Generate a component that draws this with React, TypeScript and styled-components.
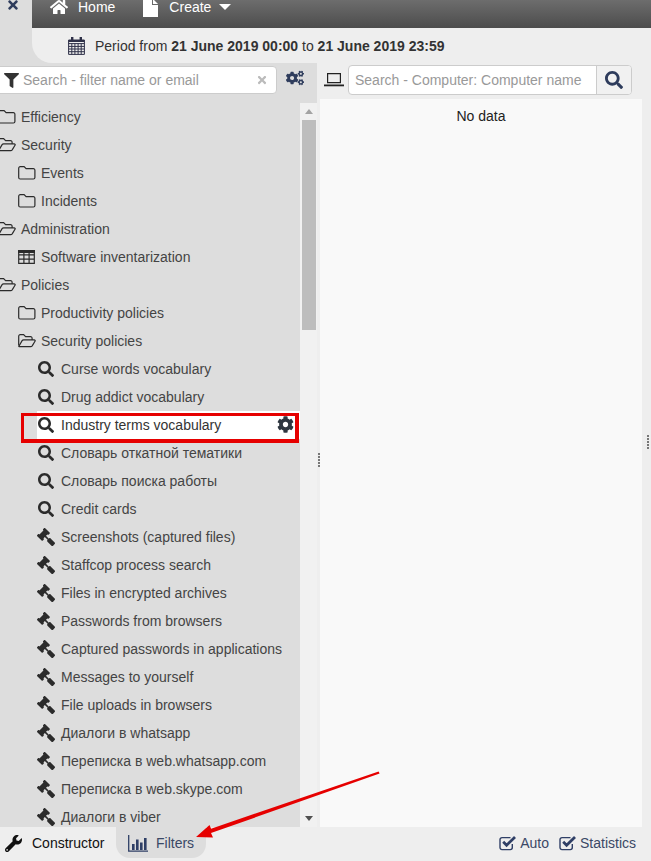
import React from "react";
import styled, { createGlobalStyle } from "styled-components";
import { FaCog, FaCogs, FaFilter, FaGavel, FaHome, FaSearch, FaTimes, FaWrench } from "react-icons/fa";

const GlobalStyle = createGlobalStyle`
  html, body {
    margin: 0;
    padding: 0;
    background: #eee;
  }
  body {
    font-family: "Liberation Sans", Arial, sans-serif;
    font-size: 14px;
    overflow: hidden;
  }
`;

type TreeItem = { label: string; icon: string; level: number; selected?: boolean };

const items: TreeItem[] = [
  { label: "Efficiency", icon: "folder", level: 0 },
  { label: "Security", icon: "open", level: 0 },
  { label: "Events", icon: "folder", level: 1 },
  { label: "Incidents", icon: "folder", level: 1 },
  { label: "Administration", icon: "open", level: 0 },
  { label: "Software inventarization", icon: "table", level: 1 },
  { label: "Policies", icon: "open", level: 0 },
  { label: "Productivity policies", icon: "folder", level: 1 },
  { label: "Security policies", icon: "open", level: 1 },
  { label: "Curse words vocabulary", icon: "search", level: 2 },
  { label: "Drug addict vocabulary", icon: "search", level: 2 },
  { label: "Industry terms vocabulary", icon: "search", level: 2, selected: true },
  { label: "Словарь откатной тематики", icon: "search", level: 2 },
  { label: "Словарь поиска работы", icon: "search", level: 2 },
  { label: "Credit cards", icon: "search", level: 2 },
  { label: "Screenshots (captured files)", icon: "gavel", level: 2 },
  { label: "Staffcop process search", icon: "gavel", level: 2 },
  { label: "Files in encrypted archives", icon: "gavel", level: 2 },
  { label: "Passwords from browsers", icon: "gavel", level: 2 },
  { label: "Captured passwords in applications", icon: "gavel", level: 2 },
  { label: "Messages to yourself", icon: "gavel", level: 2 },
  { label: "File uploads in browsers", icon: "gavel", level: 2 },
  { label: "Диалоги в whatsapp", icon: "gavel", level: 2 },
  { label: "Переписка в web.whatsapp.com", icon: "gavel", level: 2 },
  { label: "Переписка в web.skype.com", icon: "gavel", level: 2 },
  { label: "Диалоги в viber", icon: "gavel", level: 2 },
];

const FolderIcon = () => (
  <Outline width="18" height="14" viewBox="0 0 18 14">
    <path d="M2.2.7h3.9l2 2h7.3a1.5 1.5 0 0 1 1.5 1.5v7.3a1.5 1.5 0 0 1-1.5 1.5H2.2a1.5 1.5 0 0 1-1.5-1.5V2.2A1.5 1.5 0 0 1 2.2.7z" />
  </Outline>
);

const OpenFolderIcon = () => (
  <Outline width="18" height="14" viewBox="0 0 18 14">
    <path d="M.7 11.5V2.2A1.5 1.5 0 0 1 2.2.7h3.4l2 2h5a1.5 1.5 0 0 1 1.5 1.5v1.7" />
    <path d="M.9 12.2l3.2-5.5a2 2 0 0 1 1.5-.8h10.6c.8 0 1.2.7.8 1.3l-2.8 4.7a2 2 0 0 1-1.5.8H1.6c-.6 0-.9-.2-.7-.5z" />
  </Outline>
);

const TableIcon = () => (
  <Outline width="17" height="14" viewBox="0 0 17 14">
    <path d="M.7.7h15.6v12.6H.7zM.7 4.9h15.6M.7 9.1h15.6M5.9.7v12.6M11.1.7v12.6" />
    <path d="M.7.7h15.6v1.6H.7z" fill="#2b2b2b" />
  </Outline>
);

const TreeIcon = ({ name }: { name: string }) => {
  if (name === "folder") return <FolderIcon />;
  if (name === "open") return <OpenFolderIcon />;
  if (name === "table") return <TableIcon />;
  if (name === "search") return <SearchGlyph />;
  return <GavelGlyph />;
};

const CheckMark = () => (
  <CheckSvg viewBox="0 0 18 16">
    <path
      d="M13.3 9v3.6a2 2 0 0 1-2 2H3a2 2 0 0 1-2-2V4.6a2 2 0 0 1 2-2h8.5"
      fill="none"
      stroke="#2f3f66"
      strokeWidth="1.4"
    />
    <path d="M4.2 6.8l3.4 3.4 8.4-8.2" fill="none" stroke="#2f3f66" strokeWidth="2.8" />
  </CheckSvg>
);

const App = () => {
  return (
    <Page>
      <GlobalStyle />
      <Header>
        <Corner>
          <FaTimes />
        </Corner>
        <HeaderMain>
          <NavBar>
            <NavItem>
              <FaHome />
              <span>Home</span>
            </NavItem>
            <NavItem>
              <FileIcon viewBox="0 0 15 18">
                <path d="M0 0h9v6h6v12H0z" fill="#fff" />
                <path d="M10 0l5 5h-5z" fill="#fff" />
              </FileIcon>
              <span>Create</span>
              <Caret />
            </NavItem>
          </NavBar>
          <PeriodBar>
            <CalendarIcon viewBox="0 0 17 18">
              <path
                d="M.6 3h15.8v14.4H.6zM.6 6.6h15.8M.6 9.4h15.8M.6 12h15.8M.6 14.7h15.8M3.8 6.6v10.8M6.9 6.6v10.8M10.1 6.6v10.8M13.2 6.6v10.8"
                fill="none"
                stroke="#2e3048"
                strokeWidth="1"
              />
              <path d="M3 0h2.4v5H3zM11.6 0H14v5h-2.4zM.6 3h15.8v2H.6z" fill="#2e3048" />
            </CalendarIcon>
            <span>
              Period from <b>21 June 2019 00:00</b> to <b>21 June 2019 23:59</b>
            </span>
          </PeriodBar>
        </HeaderMain>
      </Header>

      <Content>
        <Sidebar>
          <SideTools>
            <FilterBox>
              <FaFilter />
              <FilterInput>Search - filter name or email</FilterInput>
              <ClearIcon>
                <FaTimes />
              </ClearIcon>
            </FilterBox>
            <CogsButton>
              <FaCogs />
            </CogsButton>
          </SideTools>
          <SideBody>
            <Tree>
              {items.map((item) => (
                <Row key={item.label} $level={item.level} $selected={item.selected}>
                  <RowIcon>
                    <TreeIcon name={item.icon} />
                  </RowIcon>
                  <span>{item.label}</span>
                  {item.selected ? (
                    <RowCog>
                      <FaCog />
                    </RowCog>
                  ) : null}
                </Row>
              ))}
            </Tree>
            <Scrollbar>
              <ScrollUp />
              <ScrollThumb />
              <ScrollDown />
            </Scrollbar>
          </SideBody>
        </Sidebar>

        <Splitter>
          <SplitDots $top={390} />
        </Splitter>

        <Panel>
          <PanelTools>
            <LaptopIcon viewBox="0 0 20 14">
              <path d="M3.6.7h12.8v9H3.6z" fill="none" stroke="#222" strokeWidth="1.2" />
              <path d="M0 12.4h20" stroke="#222" strokeWidth="1.8" />
            </LaptopIcon>
            <SearchGroup>
              <SearchInput>Search - Computer: Computer name</SearchInput>
              <SearchButton>
                <FaSearch />
              </SearchButton>
            </SearchGroup>
          </PanelTools>
          <PanelBody>No data</PanelBody>
        </Panel>

        <RightGutter>
          <SplitDots $top={372} />
        </RightGutter>
      </Content>

      <Footer>
        <FooterLeft>
          <ConstructorTab>
            <FaWrench />
            <span>Constructor</span>
          </ConstructorTab>
          <FiltersTab>
            <ChartIcon viewBox="0 0 20 17">
              <path d="M.7 0v16.2H20" fill="none" stroke="#2f3f66" strokeWidth="1.3" />
              <path d="M4 9h2.6v6H4zM8 4.5h2.6V15H8zM12 7.5h2.6V15H12zM16 3h2.6v12H16z" fill="#2f3f66" />
            </ChartIcon>
            <span>Filters</span>
          </FiltersTab>
        </FooterLeft>
        <FooterRight>
          <CheckItem>
            <CheckMark />
            <span>Auto</span>
          </CheckItem>
          <CheckItem>
            <CheckMark />
            <span>Statistics</span>
          </CheckItem>
        </FooterRight>
      </Footer>

      <Highlight />
      <Arrow viewBox="0 0 651 861">
        <path d="M378.6 771.4l1 2.2L211 833l2 4.5-17-.4 13.5-12 1.6 3.6z" fill="#e60000" />
      </Arrow>
    </Page>
  );
};

export default App;

const Page = styled.div`
  position: relative;
  display: flex;
  flex-direction: column;
  width: 651px;
  height: 861px;
  overflow: hidden;
  background: #eee;
`;

const Header = styled.div`
  display: flex;
  height: 63px;
  flex: none;
  background: #ddd;
`;

const Corner = styled.div`
  width: 32px;
  color: #2e3c5c;
  font-size: 14px;
  svg {
    display: block;
    margin: -2px 0 0 6px;
  }
`;

const HeaderMain = styled.div`
  flex: 1;
  display: flex;
  flex-direction: column;
`;

const NavBar = styled.div`
  height: 28px;
  flex: none;
  display: flex;
  align-items: flex-start;
  background: linear-gradient(#6d6d6d, #4c4c4c);
  color: #fff;
  padding-left: 18px;
  gap: 28px;
`;

const NavItem = styled.div`
  display: flex;
  align-items: center;
  height: 14px;
  gap: 10px;
  font-size: 14px;
  svg {
    font-size: 18px;
  }
`;

const FileIcon = styled.svg`
  width: 15px;
  height: 18px;
  margin-top: 2px;
  margin-right: 1px;
`;

const Caret = styled.i`
  width: 0;
  height: 0;
  margin-left: -2px;
  border-left: 6px solid transparent;
  border-right: 6px solid transparent;
  border-top: 6px solid #fff;
`;

const PeriodBar = styled.div`
  flex: 1;
  display: flex;
  align-items: center;
  gap: 10px;
  padding-left: 36px;
  background: #eee;
  border-bottom-left-radius: 20px;
  color: #333;
  font-size: 14px;
`;

const CalendarIcon = styled.svg`
  width: 17px;
  height: 18px;
`;

const Content = styled.div`
  flex: 1;
  min-height: 0;
  display: flex;
`;

const Sidebar = styled.div`
  width: 317px;
  flex: none;
  display: flex;
  flex-direction: column;
  background: #ddd;
`;

const SideTools = styled.div`
  height: 36px;
  flex: none;
  display: flex;
  align-items: flex-start;
  padding-top: 3px;
  box-sizing: border-box;
`;

const FilterBox = styled.div`
  width: 281px;
  height: 28px;
  margin-left: -4px;
  box-sizing: border-box;
  display: flex;
  align-items: center;
  background: #fff;
  border: 1px solid #ccc;
  border-radius: 4px;
  padding-left: 7px;
  svg {
    font-size: 15px;
    color: #333;
  }
`;

const FilterInput = styled.div`
  flex: 1;
  margin-left: 4px;
  color: #999;
`;

const ClearIcon = styled.div`
  display: flex;
  margin-right: 8px;
  svg {
    font-size: 12px;
    color: #bbb;
  }
`;

const CogsButton = styled.div`
  display: flex;
  margin: 3px 0 0 9px;
  svg {
    font-size: 18px;
    color: #2e3c5c;
  }
`;

const SideBody = styled.div`
  flex: 1;
  min-height: 0;
  display: flex;
`;

const Tree = styled.div`
  width: 300px;
  flex: none;
  overflow: hidden;
  padding-top: 4px;
  box-sizing: border-box;
`;

const Row = styled.div<{ $level: number; $selected?: boolean }>`
  position: relative;
  display: flex;
  align-items: center;
  height: 28px;
  margin-left: ${(p) => (p.$selected ? 37 : 0)}px;
  padding-left: ${(p) => (p.$selected ? 3 : p.$level * 20)}px;
  color: ${(p) => (p.$selected ? "#333" : "#444")};
  background: ${(p) => (p.$selected ? "#fff" : "transparent")};
  font-size: 14px;
  white-space: nowrap;
`;

const RowIcon = styled.span`
  width: 23px;
  margin-left: -2px;
  display: flex;
  align-items: center;
  flex: none;
  color: #2b2b2b;
`;

const Outline = styled.svg`
  flex: none;
  fill: none;
  stroke: #2b2b2b;
  stroke-width: 1.2;
`;

const SearchGlyph = styled(FaSearch)`
  font-size: 16px;
`;

const GavelGlyph = styled(FaGavel)`
  font-size: 18px;
  margin-left: -1px;
  transform: scaleX(-1);
`;

const RowCog = styled.span`
  position: absolute;
  right: 6px;
  top: 5px;
  display: flex;
  svg {
    font-size: 17px;
    color: #2e3640;
  }
`;

const Scrollbar = styled.div`
  width: 17px;
  margin-top: 4px;
  flex: none;
  display: flex;
  flex-direction: column;
  align-items: center;
  background: #f1f1f1;
`;

const ScrollUp = styled.i`
  width: 0;
  height: 0;
  margin: 6px 0 6px;
  border-left: 4px solid transparent;
  border-right: 4px solid transparent;
  border-bottom: 5px solid #a3a3a3;
`;

const ScrollThumb = styled.div`
  width: 14px;
  height: 210px;
  background: #bdbdbd;
`;

const ScrollDown = styled.i`
  width: 0;
  height: 0;
  margin-top: auto;
  margin-bottom: 6px;
  border-left: 4px solid transparent;
  border-right: 4px solid transparent;
  border-top: 5px solid #505050;
`;

const Splitter = styled.div`
  position: relative;
  width: 3px;
  flex: none;
  background: #eee;
`;

const SplitDots = styled.div<{ $top: number }>`
  position: absolute;
  left: 1px;
  top: ${(p) => p.$top}px;
  width: 2px;
  height: 14px;
  background: repeating-linear-gradient(#777 0 2px, transparent 2px 3px);
`;

const Panel = styled.div`
  width: 322px;
  flex: none;
  display: flex;
  flex-direction: column;
  background: #eee;
`;

const PanelTools = styled.div`
  height: 36px;
  flex: none;
  display: flex;
  align-items: flex-start;
  padding: 2px 0 0 4px;
  box-sizing: border-box;
`;

const LaptopIcon = styled.svg`
  width: 20px;
  height: 14px;
  margin-top: 8px;
`;

const SearchGroup = styled.div`
  display: flex;
  width: 284px;
  height: 30px;
  box-sizing: border-box;
  margin-left: 4px;
  background: #fff;
  border: 1px solid #ccc;
  border-radius: 4px;
`;

const SearchInput = styled.div`
  flex: 1;
  padding-left: 6px;
  line-height: 28px;
  color: #999;
  white-space: nowrap;
`;

const SearchButton = styled.div`
  width: 34px;
  border-left: 1px solid #ccc;
  display: flex;
  align-items: center;
  justify-content: center;
  background: #f1f1f1;
  border-radius: 0 3px 3px 0;
  svg {
    font-size: 18px;
    color: #2e3c5c;
  }
`;

const PanelBody = styled.div`
  flex: 1;
  background: #f9f9f9;
  text-align: center;
  color: #222;
  padding-top: 9px;
  line-height: 16px;
`;

const RightGutter = styled.div`
  position: relative;
  flex: 1;
  background: #eee;
  ${SplitDots} {
    left: 5px;
  }
`;

const Footer = styled.div`
  height: 34px;
  flex: none;
  display: flex;
  justify-content: space-between;
  background: #eee;
`;

const FooterLeft = styled.div`
  display: flex;
`;

const ConstructorTab = styled.div`
  width: 116px;
  height: 32px;
  display: flex;
  align-items: center;
  padding-left: 5px;
  gap: 10px;
  box-sizing: border-box;
  color: #111;
  svg {
    font-size: 17px;
  }
`;

const FiltersTab = styled.div`
  width: 90px;
  height: 31px;
  display: flex;
  align-items: center;
  gap: 8px;
  padding: 1px 0 0 12px;
  box-sizing: border-box;
  background: #ddd;
  border-radius: 0 0 14px 14px;
  color: #3a4866;
`;

const ChartIcon = styled.svg`
  width: 20px;
  height: 17px;
`;

const FooterRight = styled.div`
  display: flex;
  align-items: center;
  height: 32px;
  gap: 10px;
  padding-right: 15px;
`;

const CheckItem = styled.div`
  display: flex;
  align-items: center;
  gap: 3px;
  color: #3a4866;
  &:first-child svg {
    margin-left: -1px;
  }
`;

const CheckSvg = styled.svg`
  width: 18px;
  height: 16px;
`;

const Highlight = styled.div`
  position: absolute;
  left: 21px;
  top: 413px;
  width: 278px;
  height: 30px;
  box-sizing: border-box;
  border-style: solid;
  border-color: #e60000;
  border-width: 3px 4px 4px 3px;
  pointer-events: none;
`;

const Arrow = styled.svg`
  position: absolute;
  left: 0;
  top: 0;
  width: 651px;
  height: 861px;
  pointer-events: none;
`;
